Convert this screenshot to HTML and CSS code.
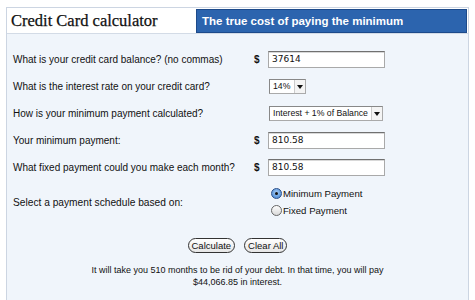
FILE: index.html
```html
<!DOCTYPE html>
<html>
<head>
<meta charset="utf-8">
<link rel="stylesheet" href="styles.css">
</head>
<body>
<div class="panel">
  <div class="header">
    <h1 class="title">Credit Card calculator</h1>
    <div class="banner">The true cost of paying the minimum</div>
  </div>
  <div class="body">
    <div class="form">
      <div class="label">What is your credit card balance? (no commas)</div>
      <div class="cur">$</div>
      <div class="field"><span class="input wide">37614</span></div>

      <div class="label">What is the interest rate on your credit card?</div>
      <div class="cur"></div>
      <div class="field"><span class="select sm"><span class="sel-text">14%</span><span class="sel-arrow"></span></span></div>

      <div class="label">How is your minimum payment calculated?</div>
      <div class="cur"></div>
      <div class="field"><span class="select lg"><span class="sel-text">Interest + 1% of Balance</span><span class="sel-arrow"></span></span></div>

      <div class="label">Your minimum payment:</div>
      <div class="cur">$</div>
      <div class="field"><span class="input wide">810.58</span></div>

      <div class="label">What fixed payment could you make each month?</div>
      <div class="cur">$</div>
      <div class="field"><span class="input wide">810.58</span></div>
    </div>

    <div class="schedule">
      <div class="label big">Select a payment schedule based on:</div>
      <div class="radios">
        <div class="radio-row"><span class="radio on"></span>Minimum Payment</div>
        <div class="radio-row"><span class="radio"></span>Fixed Payment</div>
      </div>
    </div>

    <div class="buttons">
      <span class="btn">Calculate</span>
      <span class="btn">Clear All</span>
    </div>

    <p class="result">It will take you 510 months to be rid of your debt. In that time, you will pay<br>$44,066.85 in interest.</p>
  </div>
</div>
</body>
</html>
```

FILE: styles.css
```css
html, body {
  margin: 0;
  padding: 0;
  background: #ffffff;
  height: 100%;
}
body {
  font-family: "Liberation Sans", Arial, sans-serif;
  color: #111;
}
.panel {
  margin: 7px 0 0 6px;
  width: 463px;
  border: 1px solid #ccd5e2;
  border-bottom: none;
  height: 293px;
  background: #f0f5fb;
  box-sizing: border-box;
  display: flex;
  flex-direction: column;
}
.header {
  display: flex;
  align-items: center;
  background: #ffffff;
  height: 25px;
  border-bottom: 1px solid #d3dbe6;
}
.title {
  margin: 0 0 0 4px;
  font-family: "Liberation Serif", "Times New Roman", serif;
  font-weight: normal;
  font-size: 16.5px;
  color: #111;
  flex: 1;
  line-height: 25px;
  -webkit-text-stroke: 0.25px #111;
}
.banner {
  width: 271px;
  height: 24px;
  margin-right: 1px;
  box-sizing: border-box;
  background: #2c64ae;
  border: 1px solid #1d4a8a;
  color: #fff;
  font-weight: bold;
  font-size: 11.5px;
  line-height: 22px;
  padding-left: 5px;
}
.body {
  padding: 12px 6px 0 6px;
}
.form {
  display: grid;
  grid-template-columns: 240px 15px auto;
  grid-auto-rows: 27px;
  align-items: center;
}
.label {
  font-size: 10px;
  color: #111;
}
.label.big {
  font-size: 10.2px;
}
.cur {
  font-size: 10px;
  font-weight: bold;
  padding-left: 1px;
}
.input {
  display: block;
  box-sizing: border-box;
  height: 17px;
  background: #fff;
  border: 1px solid #a9a9a9;
  border-top-color: #707070;
  box-shadow: inset 0 1px 0 #d8d8d8;
  font-family: "DejaVu Sans", sans-serif;
  font-size: 9px;
  line-height: 15px;
  padding-left: 3px;
}
.input.wide {
  width: 117px;
}
.select {
  display: flex;
  box-sizing: border-box;
  height: 15px;
  background: #fff;
  border: 1px solid #888;
  border-right-color: #aaa;
  border-bottom-color: #aaa;
  font-family: "Liberation Sans", Arial, sans-serif;
  font-size: 8.7px;
  line-height: 13px;
  margin-left: 1px;
}
.select.sm { width: 37px; }
.select.lg { width: 114px; }
.sel-text {
  flex: 1;
  padding-left: 3px;
  white-space: nowrap;
  overflow: hidden;
}
.sel-arrow {
  width: 10px;
  border-left: 1px solid #ccc;
  position: relative;
  background: #f4f4f4;
}
.sel-arrow::after {
  content: "";
  position: absolute;
  left: 2px;
  top: 5px;
  border-left: 3px solid transparent;
  border-right: 3px solid transparent;
  border-top: 4px solid #111;
}
.schedule {
  display: grid;
  grid-template-columns: 258px auto;
  align-items: center;
  margin-top: 7px;
}
.radios {
  display: flex;
  flex-direction: column;
  gap: 6px;
}
.radio-row {
  display: flex;
  align-items: center;
  font-size: 9.6px;
  color: #111;
}
.radio {
  width: 11px;
  height: 11px;
  box-sizing: border-box;
  border-radius: 50%;
  border: 1px solid #666;
  background: linear-gradient(#fdfdfd, #d9d9d9);
  margin-right: 1px;
  position: relative;
}
.radio.on {
  border-color: #2a4f8a;
  background: radial-gradient(circle at 50% 40%, #a9cdf5, #3a7fd0);
}
.radio.on::after {
  content: "";
  position: absolute;
  left: 3px;
  top: 3px;
  width: 3px;
  height: 3px;
  border-radius: 50%;
  background: #111;
}
.buttons {
  display: flex;
  justify-content: center;
  gap: 9px;
  margin-top: 22px;
}
.btn {
  display: inline-block;
  box-sizing: border-box;
  height: 15px;
  padding: 0 3px;
  border: 1px solid #333;
  border-radius: 8px;
  background: linear-gradient(#ffffff, #e6e6e6);
  font-family: "Liberation Sans", Arial, sans-serif;
  font-size: 9.5px;
  line-height: 13px;
  color: #111;
}
.result {
  margin: 11px 0 0 0;
  text-align: center;
  font-size: 9px;
  line-height: 12px;
  color: #111;
}
```
